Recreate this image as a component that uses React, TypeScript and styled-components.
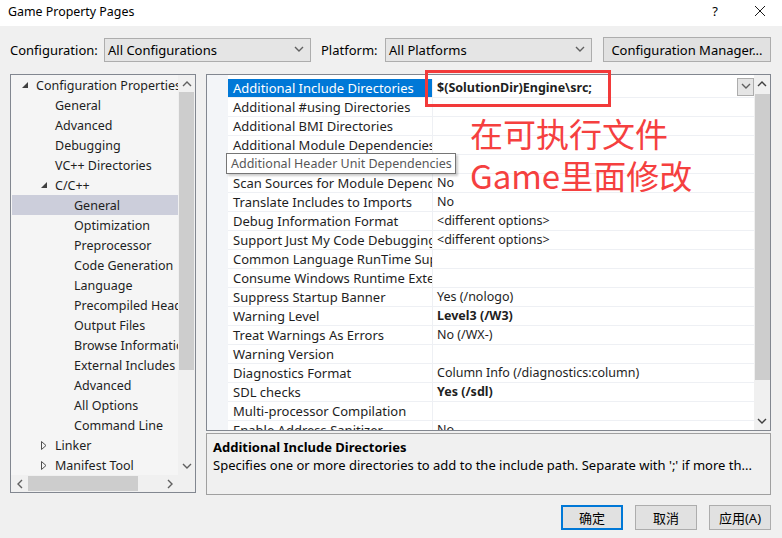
import styled, { createGlobalStyle } from "styled-components"

const TREE = [
    { label: "Configuration Properties", level: 0, arrow: "open" },
    { label: "General", level: 1 },
    { label: "Advanced", level: 1 },
    { label: "Debugging", level: 1 },
    { label: "VC++ Directories", level: 1 },
    { label: "C/C++", level: 1, arrow: "open" },
    { label: "General", level: 2, selected: true },
    { label: "Optimization", level: 2 },
    { label: "Preprocessor", level: 2 },
    { label: "Code Generation", level: 2 },
    { label: "Language", level: 2 },
    { label: "Precompiled Headers", level: 2 },
    { label: "Output Files", level: 2 },
    { label: "Browse Information", level: 2 },
    { label: "External Includes", level: 2 },
    { label: "Advanced", level: 2 },
    { label: "All Options", level: 2 },
    { label: "Command Line", level: 2 },
    { label: "Linker", level: 1, arrow: "closed" },
    { label: "Manifest Tool", level: 1, arrow: "closed" },
]

const PROPS: { name: string; value?: string; bold?: boolean }[] = [
    { name: "Additional Include Directories", value: "$(SolutionDir)Engine\\src;", bold: true },
    { name: "Additional #using Directories" },
    { name: "Additional BMI Directories" },
    { name: "Additional Module Dependencies" },
    { name: "Additional Header Unit Dependencies" },
    { name: "Scan Sources for Module Dependencies", value: "No" },
    { name: "Translate Includes to Imports", value: "No" },
    { name: "Debug Information Format", value: "<different options>" },
    { name: "Support Just My Code Debugging", value: "<different options>" },
    { name: "Common Language RunTime Support" },
    { name: "Consume Windows Runtime Extension" },
    { name: "Suppress Startup Banner", value: "Yes (/nologo)" },
    { name: "Warning Level", value: "Level3 (/W3)", bold: true },
    { name: "Treat Warnings As Errors", value: "No (/WX-)" },
    { name: "Warning Version" },
    { name: "Diagnostics Format", value: "Column Info (/diagnostics:column)" },
    { name: "SDL checks", value: "Yes (/sdl)", bold: true },
    { name: "Multi-processor Compilation" },
    { name: "Enable Address Sanitizer", value: "No" },
]

const Chevron = ({ dir = "down", color = "#606060" }: { dir?: "up" | "down" | "left" | "right"; color?: string }) => {
    const pts = {
        down: "1,2 5,6 9,2",
        up: "1,7 5,3 9,7",
        left: "7,1 3,5 7,9",
        right: "3,1 7,5 3,9",
    }[dir]
    return (
        <svg width="10" height="10" viewBox="0 0 10 10">
            <polyline points={pts} fill="none" stroke={color} strokeWidth="1.4" />
        </svg>
    )
}

const TreeArrow = ({ kind }: { kind?: string }) => {
    if (kind === "open") {
        return (
            <svg width="7" height="7" viewBox="0 0 7 7">
                <polygon points="6,0 6,6 0,6" fill="#404040" />
            </svg>
        )
    }
    if (kind === "closed") {
        return (
            <svg width="6" height="9" viewBox="0 0 6 9">
                <polygon points="0.5,0.5 5,4.5 0.5,8.5" fill="none" stroke="#505050" strokeWidth="1" />
            </svg>
        )
    }
    return null
}

export default function App() {
    return (
        <>
            <GlobalStyle />
            <Window>
                <TitleBar>
                    <span>Game Property Pages</span>
                    <TitleButtons>
                        <span>?</span>
                        <svg width="12" height="12" viewBox="0 0 12 12">
                            <path d="M1 1 L11 11 M11 1 L1 11" stroke="#1a1a1a" strokeWidth="1" />
                        </svg>
                    </TitleButtons>
                </TitleBar>

                <ConfigRow>
                    <Label>Configuration:</Label>
                    <Combo $width={207}>
                        <span>All Configurations</span>
                        <Chevron />
                    </Combo>
                    <Label $gap={10}>Platform:</Label>
                    <Combo $width={207}>
                        <span>All Platforms</span>
                        <Chevron />
                    </Combo>
                    <Button $width={168} $height={25} style={{ marginLeft: 11 }}>Configuration Manager...</Button>
                </ConfigRow>

                <Main>
                    <TreeBox>
                        <TreeList>
                            {TREE.map((item, i) => (
                                <TreeRow key={i} $selected={item.selected}>
                                    <ArrowSlot $level={item.level}>
                                        <TreeArrow kind={item.arrow} />
                                    </ArrowSlot>
                                    {item.label}
                                </TreeRow>
                            ))}
                        </TreeList>
                        <VScroll>
                            <ScrollArrow><Chevron dir="up" /></ScrollArrow>
                            <VThumb $top={0} $size={278} />
                            <Spacer />
                            <ScrollArrow><Chevron dir="down" /></ScrollArrow>
                        </VScroll>
                        <HScroll>
                            <ScrollArrow><Chevron dir="left" /></ScrollArrow>
                            <HThumb />
                            <Spacer />
                            <ScrollArrow><Chevron dir="right" /></ScrollArrow>
                        </HScroll>
                        <Corner />
                    </TreeBox>

                    <RightCol>
                        <GridBox>
                            <Gutter />
                            <GridRows>
                                {PROPS.map((p, i) => (
                                    <PropRow key={i}>
                                        <NameCell $selected={i === 0}>{p.name}</NameCell>
                                        <ValueCell $bold={p.bold}>
                                            <span>{p.value}</span>
                                            {i === 0 && (
                                                <DropButton>
                                                    <Chevron />
                                                </DropButton>
                                            )}
                                        </ValueCell>
                                    </PropRow>
                                ))}
                            </GridRows>
                            <GridScroll>
                                <ScrollArrow><Chevron dir="up" color="#404040" /></ScrollArrow>
                                <VThumb $top={2} $size={286} />
                                <Spacer />
                                <ScrollArrow><Chevron dir="down" color="#404040" /></ScrollArrow>
                            </GridScroll>
                        </GridBox>
                        <DescBox>
                            <DescTitle>Additional Include Directories</DescTitle>
                            <DescText>Specifies one or more directories to add to the include path. Separate with ';' if more th...</DescText>
                        </DescBox>
                    </RightCol>
                </Main>

                <Footer>
                    <Button $width={62} $height={25} $focused>确定</Button>
                    <Button $width={62} $height={25}>取消</Button>
                    <Button $width={62} $height={25}>应用(A)</Button>
                </Footer>

                <Tooltip>Additional Header Unit Dependencies</Tooltip>
                <RedBox />
                <RedNote>
                    在可执行文件
                    <br />
                    Game里面修改
                </RedNote>
            </Window>
        </>
    )
}

const GlobalStyle = createGlobalStyle`
    html, body {
        margin: 0;
        padding: 0;
        background: #f0f0f0;
    }
    body {
        font-family: "Noto Sans", "Noto Sans CJK SC", sans-serif;
        font-size: 12px;
        color: #000;
    }
`

const Window = styled.div`
    position: relative;
    width: 782px;
    height: 538px;
    background: #f0f0f0;
    display: flex;
    flex-direction: column;
    overflow: hidden;
`

const TitleBar = styled.div`
    height: 26px;
    background: #fff;
    display: flex;
    align-items: center;
    justify-content: space-between;
    padding: 0 16px 4px 8px;
    box-sizing: border-box;
    font-size: 12.4px;
    color: #000;
`

const TitleButtons = styled.div`
    display: flex;
    align-items: center;
    gap: 36px;
    font-size: 13px;
`

const ConfigRow = styled.div`
    display: flex;
    align-items: center;
    padding: 11px 11px 0 10px;
    height: 36px;
    box-sizing: border-box;
`

const Label = styled.span<{ $gap?: number }>`
    width: ${(p) => (p.$gap ? 64 : 94)}px;
    margin-left: ${(p) => p.$gap || 0}px;
    font-size: 13px;
`

const Combo = styled.div<{ $width: number }>`
    width: ${(p) => p.$width}px;
    height: 24px;
    box-sizing: border-box;
    border: 1px solid #adadad;
    background: #e5e5e5;
    display: flex;
    align-items: center;
    justify-content: space-between;
    padding: 0 6px 0 3px;
    font-size: 13px;
`

const Button = styled.div<{ $width: number; $height: number; $focused?: boolean }>`
    width: ${(p) => p.$width}px;
    height: ${(p) => p.$height}px;
    box-sizing: border-box;
    border: ${(p) => (p.$focused ? "2px solid #0078d7" : "1px solid #adadad")};
    background: #e1e1e1;
    display: flex;
    align-items: center;
    justify-content: center;
    font-size: 13px;
`

const Main = styled.div`
    display: flex;
    gap: 10px;
    padding: 2px 11px 0 10px;
    margin-top: 10px;
`

const TreeBox = styled.div`
    width: 186px;
    height: 419px;
    box-sizing: border-box;
    border: 1px solid #828790;
    background: #f5f5f5;
    display: grid;
    grid-template-columns: 1fr 17px;
    grid-template-rows: 1fr 17px;
`

const TreeList = styled.div`
    padding-top: 0;
    padding-left: 1px;
    overflow: hidden;
`

const TreeRow = styled.div<{ $selected?: boolean }>`
    height: 20px;
    display: flex;
    align-items: center;
    white-space: nowrap;
    font-size: 12.5px;
    color: #1e1e1e;
    background: ${(p) => (p.$selected ? "#cccedb" : "transparent")};
`

const ArrowSlot = styled.span<{ $level: number }>`
    width: 14px;
    flex-shrink: 0;
    margin-left: ${(p) => 10 + p.$level * 19}px;
    display: flex;
    align-items: center;
`

const VScroll = styled.div`
    background: #f0f0f0;
    display: flex;
    flex-direction: column;
    align-items: center;
`

const GridScroll = styled(VScroll)`
    width: 16px;
`

const ScrollArrow = styled.div`
    width: 17px;
    height: 17px;
    flex-shrink: 0;
    display: flex;
    align-items: center;
    justify-content: center;
`

const VThumb = styled.div<{ $top: number; $size: number }>`
    width: 15px;
    height: ${(p) => p.$size}px;
    margin-top: ${(p) => p.$top}px;
    background: #cdcdcd;
`

const Spacer = styled.div`
    flex: 1;
`

const HScroll = styled.div`
    background: #f0f0f0;
    display: flex;
    align-items: center;
`

const HThumb = styled.div`
    width: 110px;
    height: 15px;
    background: #cdcdcd;
`

const Corner = styled.div`
    background: #f0f0f0;
`

const RightCol = styled.div`
    flex: 1;
    display: flex;
    flex-direction: column;
    gap: 2px;
`

const GridBox = styled.div`
    height: 357px;
    box-sizing: border-box;
    border: 1px solid #828790;
    background: #fff;
    display: flex;
    overflow: hidden;
`

const Gutter = styled.div`
    width: 21px;
    background: #f3f5f8;
    flex-shrink: 0;
`

const GridRows = styled.div`
    flex: 1;
    padding-top: 4px;
    overflow: hidden;
`

const PropRow = styled.div`
    display: flex;
    height: 19px;
    box-sizing: border-box;
    border-bottom: 1px solid #eef0f4;
`

const NameCell = styled.div<{ $selected?: boolean }>`
    width: 205px;
    flex-shrink: 0;
    padding-left: 5px;
    box-sizing: border-box;
    white-space: nowrap;
    overflow: hidden;
    font-size: 13px;
    line-height: 18px;
    color: ${(p) => (p.$selected ? "#fff" : "#1e1e1e")};
    background: ${(p) => (p.$selected ? "#0078d7" : "transparent")};
    border-right: 1px solid #eef0f4;
`

const ValueCell = styled.div<{ $bold?: boolean }>`
    flex: 1;
    display: flex;
    justify-content: space-between;
    padding-left: 4px;
    white-space: nowrap;
    font-size: 12.5px;
    line-height: 18px;
    font-weight: ${(p) => (p.$bold ? 700 : 400)};
    color: #1e1e1e;
`

const DropButton = styled.div`
    width: 17px;
    height: 18px;
    margin-top: -1px;
    box-sizing: border-box;
    border: 1px solid #adadad;
    background: #e5e5e5;
    display: flex;
    align-items: center;
    justify-content: center;
`

const DescBox = styled.div`
    height: 62px;
    box-sizing: border-box;
    border: 1px solid #a0a0a0;
    padding: 4px 6px;
`

const DescTitle = styled.div`
    font-weight: 700;
    font-size: 13px;
    line-height: 18px;
`

const DescText = styled.div`
    font-size: 13px;
    line-height: 18px;
    white-space: nowrap;
`

const Footer = styled.div`
    display: flex;
    justify-content: flex-end;
    gap: 12px;
    padding: 10px 11px 0 0;
`

const Tooltip = styled.div`
    position: absolute;
    left: 226px;
    top: 153px;
    width: 230px;
    height: 21px;
    box-sizing: border-box;
    border: 1px solid #767676;
    background: #fff;
    color: #575757;
    font-size: 12.5px;
    line-height: 19px;
    padding-left: 4px;
    white-space: nowrap;
    box-shadow: 2px 2px 2px rgba(0, 0, 0, 0.2);
`

const RedBox = styled.div`
    position: absolute;
    left: 425px;
    top: 70px;
    width: 186px;
    height: 37px;
    box-sizing: border-box;
    border: 3px solid #f23a3a;
`

const RedNote = styled.div`
    position: absolute;
    left: 470px;
    top: 112px;
    font-family: "Noto Sans CJK SC", sans-serif;
    font-size: 33px;
    line-height: 42px;
    color: #f5403f;
`
